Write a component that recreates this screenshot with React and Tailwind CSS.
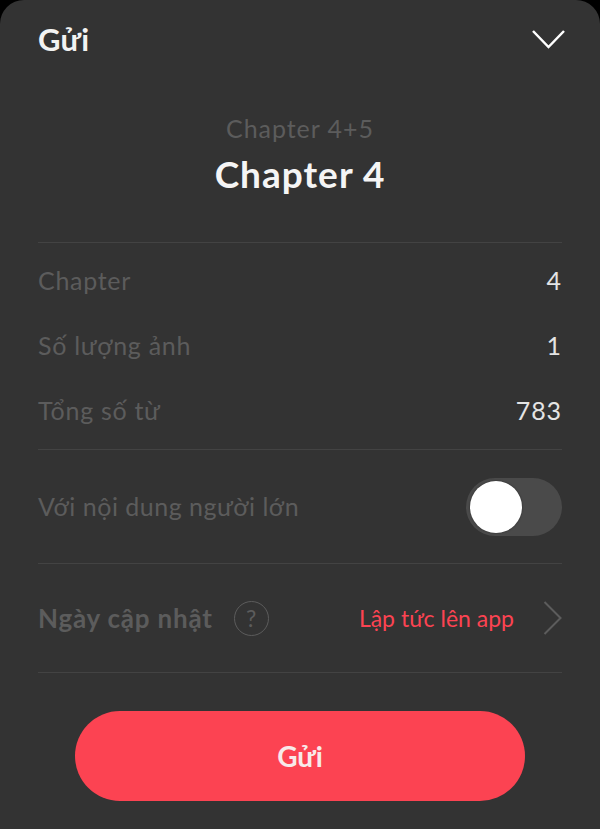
import React from 'react';

const FONT = "font-['Lato','Noto_Sans',sans-serif]";

function InfoRow({ label, value }) {
  return (
    <div className="flex h-[65px] items-center justify-between">
      <span className="text-[25px] tracking-[0.7px] text-[#5c5c5c]">{label}</span>
      <span className="text-[25px] tracking-[0.9px] text-[#e4e4e4]">{value}</span>
    </div>
  );
}

export default function App() {
  return (
    <div className="h-[829px] w-[600px] bg-black">
      <div className={`${FONT} flex h-[829px] w-[600px] flex-col overflow-hidden rounded-t-[24px] bg-[#333333]`}>
        {/* Header */}
        <div className="flex h-[79px] items-center justify-between pl-[38px] pr-[35px]">
          <span className="text-[31px] font-bold tracking-[0.3px] text-[#f2f2f2]">Gửi</span>
          <svg width="33" height="19" viewBox="0 0 33 19" fill="none" stroke="#ffffff" strokeWidth="2.5">
            <path d="M1 1 L16.5 17 L32 1" />
          </svg>
        </div>

        {/* Title */}
        <div className="mx-[38px] flex h-[164px] flex-col items-center border-b border-[#434343] pt-[32px]">
          <span className="text-[25px] leading-[34px] tracking-[0.95px] text-[#5c5c5c]">Chapter 4+5</span>
          <span className="mt-[6px] text-[37px] leading-[46px] font-bold tracking-[1px] text-[#f5f5f5]">Chapter 4</span>
        </div>

        <div className="mx-[38px] flex flex-col">
          <div className="border-b border-[#434343] pt-[5px] pb-[6px]">
            <InfoRow label="Chapter" value="4" />
            <InfoRow label="Số lượng ảnh" value="1" />
            <InfoRow label="Tổng số từ" value="783" />
          </div>

          {/* Adult toggle */}
          <div className="flex h-[114px] items-center justify-between border-b border-[#434343]">
            <span className="text-[25px] tracking-[0.5px] text-[#5c5c5c]">Với nội dung người lớn</span>
            <div className="flex h-[58px] w-[96px] items-center rounded-full bg-[#4a4a4a] pl-[4px]">
              <div className="h-[52px] w-[52px] rounded-full bg-white shadow-[0_0_2px_rgba(0,0,0,0.5)]" />
            </div>
          </div>

          {/* Update date */}
          <div className="flex h-[109px] items-center justify-between border-b border-[#434343]">
            <div className="flex items-center gap-[21px]">
              <span className="text-[26px] font-bold tracking-[0.8px] text-[#5c5c5c]">Ngày cập nhật</span>
              <span className="flex h-[35px] w-[35px] items-center justify-center rounded-full border-[1.5px] border-[#5c5c5c] text-[23px] text-[#5c5c5c]">?</span>
            </div>
            <div className="flex items-center gap-[29px]">
              <span className="text-[23px] text-[#fc4352]">Lập tức lên app</span>
              <svg width="19" height="34" viewBox="0 0 19 34" fill="none" stroke="#5c5c5c" strokeWidth="2">
                <path d="M1.5 1 L17.5 17 L1.5 33" />
              </svg>
            </div>
          </div>
        </div>

        {/* Submit */}
        <div className="flex justify-center pt-[38px]">
          <button className="h-[90px] w-[450px] rounded-full bg-[#fc4352] text-[28px] font-bold text-[#f8eaea]">Gửi</button>
        </div>
      </div>
    </div>
  );
}
